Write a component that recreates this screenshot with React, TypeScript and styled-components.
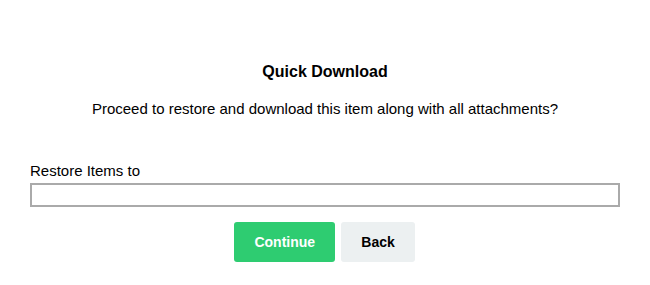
import React from "react";
import styled, { createGlobalStyle } from "styled-components";

const Global = createGlobalStyle`
  html, body { margin: 0; padding: 0; background: #fff; }
  body { font-family: "Liberation Sans", Arial, sans-serif; color: #000; }
`;

const Dialog = styled.div`
  display: flex;
  flex-direction: column;
  padding: 62px 30px 0 30px;
`;

const Title = styled.h2`
  margin: 0;
  font-size: 16px;
  line-height: 20px;
  font-weight: bold;
  text-align: center;
`;

const Message = styled.p`
  margin: 18px 0 0 0;
  font-size: 15px;
  line-height: 18px;
  text-align: center;
`;

const Field = styled.div`
  display: flex;
  flex-direction: column;
  margin-top: 44px;
`;

const Label = styled.label`
  font-size: 15px;
  line-height: 18px;
  margin-bottom: 3px;
`;

const Input = styled.input`
  box-sizing: border-box;
  width: 100%;
  height: 24px;
  border: 2px solid #aaaaaa;
  padding: 0 4px;
  font-family: inherit;
  font-size: 14px;
  outline: none;
`;

const Actions = styled.div`
  display: flex;
  justify-content: center;
  gap: 6px;
  margin-top: 15px;
  padding-right: 1px;
`;

const Button = styled.button<{ $primary?: boolean }>`
  height: 40px;
  padding: 0 20px;
  min-width: ${(p) => (p.$primary ? "101px" : "73px")};
  border: none;
  border-radius: 3px;
  font-family: inherit;
  font-size: 14px;
  font-weight: bold;
  background: ${(p) => (p.$primary ? "#2ecc71" : "#ecf0f1")};
  color: ${(p) => (p.$primary ? "#ffffff" : "#000000")};
  cursor: pointer;
`;

export default function App() {
  return (
    <>
      <Global />
      <Dialog>
        <Title>Quick Download</Title>
        <Message>Proceed to restore and download this item along with all attachments?</Message>
        <Field>
          <Label>Restore Items to</Label>
          <Input type="text" />
        </Field>
        <Actions>
          <Button $primary>Continue</Button>
          <Button>Back</Button>
        </Actions>
      </Dialog>
    </>
  );
}
